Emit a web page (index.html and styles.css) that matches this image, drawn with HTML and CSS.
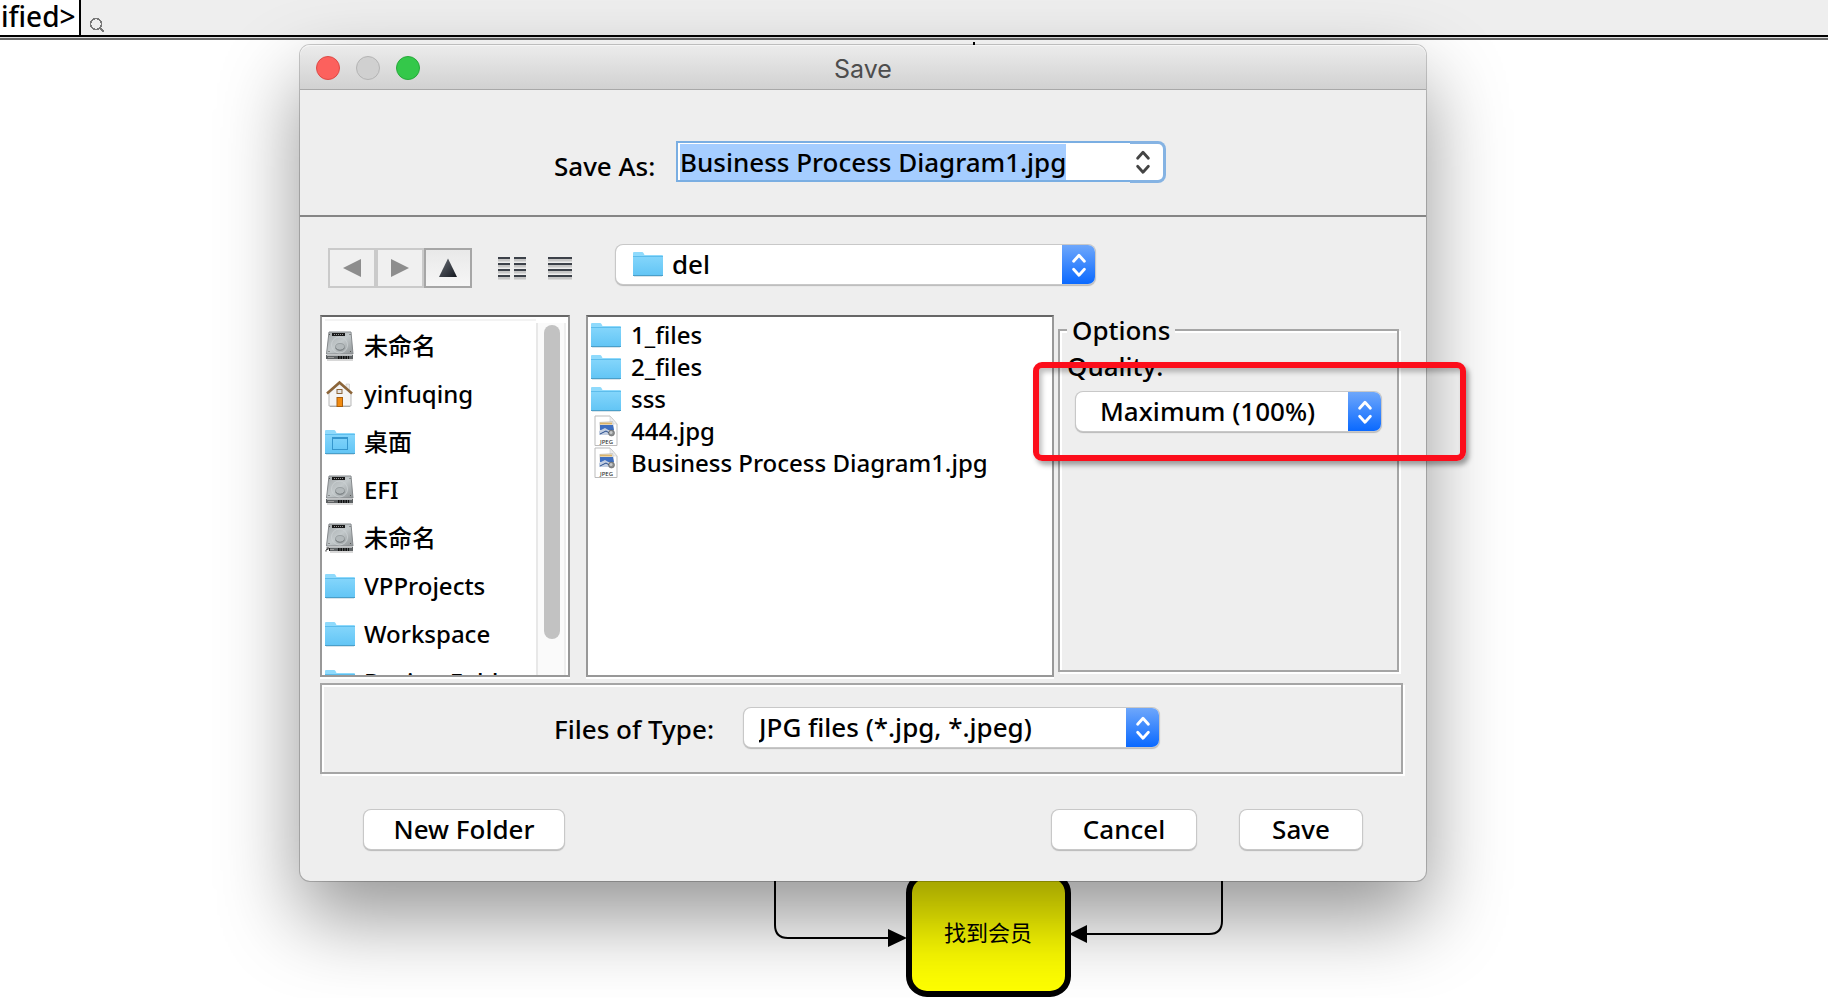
FILE: index.html
```html
<!DOCTYPE html>
<html lang="en">
<head>
    <meta charset="UTF-8">
    <meta name="viewport" content="width=device-width, initial-scale=1.0">
    <title>Save</title>
    <link rel="stylesheet" href="styles.css">
</head>
<body>
    <!-- shared icons -->
    <svg class="sprite" aria-hidden="true">
        <defs>
            <linearGradient id="folderFill" x1="0" y1="0" x2="0" y2="1">
                <stop offset="0" stop-color="#83d5fb"/>
                <stop offset="1" stop-color="#62c5f5"/>
            </linearGradient>
            <linearGradient id="diskFill" x1="0" y1="0" x2="1" y2="1">
                <stop offset="0" stop-color="#a4a9ab"/>
                <stop offset="0.5" stop-color="#c3c9cb"/>
                <stop offset="1" stop-color="#8f9496"/>
            </linearGradient>
            <linearGradient id="darkFill" x1="0" y1="0" x2="1" y2="1">
                <stop offset="0" stop-color="#6b7078"/>
                <stop offset="1" stop-color="#14181f"/>
            </linearGradient>
        </defs>
        <symbol id="folder" viewBox="0 0 30 26">
            <path d="M0 23.500V2Q0 1 1 1h8q1 0 1.500 1l1 2H29q1 0 1 1v18.500q0 1-1 1H1q-1 0-1-1z" fill="#8fdafc"/>
            <path d="M0 6h30v17.500q0 1-1 1H1q-1 0-1-1z" fill="url(#folderFill)"/>
            <path d="M0 5.500h30" stroke="#5dbdec"/>
            <path d="M0 24.500h30" stroke="#4a9fc9"/>
            <path d="M1 25.500h28" stroke="#d9e4ea"/>
        </symbol>
        <symbol id="desktop" viewBox="0 0 30 26">
            <use href="#folder"/>
            <rect x="7.500" y="8.500" width="15" height="12" fill="none" stroke="#3596cd"/>
            <path d="M7 9h16" stroke="#3596cd" stroke-width="2"/>
        </symbol>
        <symbol id="disk" viewBox="0 0 30 30">
            <path d="M2 28h26v2H2z" fill="#d8d8d8"/>
            <path d="M4 1h22l2 22H1.500z" fill="url(#diskFill)" stroke="#85898c"/>
            <path d="M1 24h27v4H1z" fill="#5e6264"/>
            <path d="M2 24.500h25" stroke="#b5b9bb"/>
            <path d="M13 26.500h11" stroke="#111" stroke-width="3" stroke-dasharray="1.500 1"/>
            <path d="M3 26.500h6" stroke="#999"/>
            <rect x="7" y="2" width="13" height="3" fill="#1a1a1a"/>
            <path d="M9 3.500h9" stroke="#999" stroke-dasharray="1 1"/>
            <circle cx="14.500" cy="14" r="8" fill="none" stroke="#cdd2d4" stroke-width="0.800"/>
            <ellipse cx="15" cy="16" rx="4.500" ry="3.500" fill="#b3b9bb" stroke="#8f9598" stroke-width="0.800"/>
            <path d="M10.500 17q4.500 4.500 9 0" fill="none" stroke="#777d80"/>
            <path d="M4.500 3v1M25 3v1M4 20v1M25.500 20v1" stroke="#555"/>
        </symbol>
        <symbol id="diskAlias" viewBox="0 0 30 30">
            <use href="#disk"/>
            <path d="M0 24h5v6H0z" fill="#fff"/>
            <path d="M1 28.500v-1q0-1.500 2.500-1.500M1.500 25h3v3" fill="none" stroke="#111"/>
        </symbol>
        <symbol id="home" viewBox="0 0 30 30">
            <path d="M21 5h3.500v8H21z" fill="#eee" stroke="#bbb" stroke-width="0.500"/>
            <path d="M4 14 14.500 5 26 14v13H4z" fill="#f4f4f4" stroke="#b9b9b9"/>
            <path d="M5 27.500h20" stroke="#aaa"/>
            <path d="M2 14.500 14.500 3.500 27 14.500" fill="none" stroke="#8c6539" stroke-width="2.500"/>
            <rect x="12" y="10.500" width="5" height="4" fill="#e4e4e4" stroke="#8c6539"/>
            <rect x="12" y="18.500" width="5.500" height="9" fill="#f28b10" stroke="#a85e0c"/>
        </symbol>
        <symbol id="jpeg" viewBox="0 0 30 32">
            <path d="M4 1h15l7 8v21.500H4z" fill="#fff" stroke="#bbb"/>
            <path d="M19 1v5q0 3 3 3h4z" fill="#eee" stroke="#c8c8c8" stroke-width="0.500"/>
            <path d="M9 7h13v9H9z" fill="#f3f3f3" stroke="#aaa" stroke-width="0.500" transform="rotate(-4 15 11)"/>
            <path d="M9 7.500h12v2H9z" fill="#d9b36a"/>
            <path d="M9 10h13l1 5H9z" fill="#3f6fc0"/>
            <path d="M8 16l6-3 5 3 4-1v5H8z" fill="#c3cfe2"/>
            <path d="M9 19l6-3 5 3" fill="none" stroke="#234a8c"/>
            <circle cx="20.500" cy="18" r="3" fill="#8d9091" stroke="#4c4c4c" stroke-width="0.500"/>
            <circle cx="20" cy="17.500" r="1.500" fill="#c7c9ca"/>
            <text x="15.500" y="28.500" class="jpeg-tag">JPEG</text>
        </symbol>
        <symbol id="updown" viewBox="0 0 16 26">
            <path d="M3 9.500 8 4l5 5.500M3 17l5 5.500L13 17" fill="none" stroke="currentColor" stroke-width="2.600" stroke-linecap="round" stroke-linejoin="round"/>
        </symbol>
    </svg>

    <header class="breadcrumb">
        <span class="crumb">ified&gt;</span>
        <svg class="search" width="16" height="16" viewBox="0 0 16 16" shape-rendering="crispEdges">
            <circle cx="7" cy="7" r="5.500" fill="none" stroke="#777" stroke-width="1.500"/>
            <path d="M11 11l4 4" stroke="#777" stroke-width="2"/>
        </svg>
    </header>

    <main class="canvas">
        <svg class="diagram" width="480" height="958" viewBox="0 0 480 958">
            <path d="M209 2v4" stroke="#000" stroke-width="2"/>
            <g fill="none" stroke="#000" stroke-width="2">
                <path d="M10 800v85q0 13 13 13h100"/>
                <path d="M457 800v81q0 13-13 13H320"/>
            </g>
            <path d="M123 889v18l19-9z"/>
            <path d="M322 885v18l-18-9z"/>
            <rect x="144" y="835" width="159" height="119" rx="18" fill="#ff0" stroke="#000" stroke-width="6"/>
            <text class="node-text" x="223" y="901">找到会员</text>
        </svg>

        <form class="dialog">
            <div class="titlebar">
                <div class="lights">
                    <button type="button" class="light red" aria-label="Close"></button>
                    <button type="button" class="light gray" aria-label="Minimize" disabled></button>
                    <button type="button" class="light green" aria-label="Zoom"></button>
                </div>
                <h1>Save</h1>
            </div>

            <div class="name-row">
                <label for="fileName">Save As:</label>
                <div class="name-field">
                    <input type="text" id="fileName" value="Business Process Diagram1.jpg" autofocus>
                    <button type="button" class="history" aria-label="Recent names">
                        <svg width="18" height="28"><use href="#updown"/></svg>
                    </button>
                </div>
            </div>

            <div class="tools">
                <div class="nav">
                    <button type="button" aria-label="Back" disabled>
                        <svg width="20" height="22" viewBox="0 0 20 22"><path d="M1 11 19 2v18z" fill="#8d8d8d"/></svg>
                    </button>
                    <button type="button" aria-label="Forward" disabled>
                        <svg width="20" height="22" viewBox="0 0 20 22"><path d="M19 11 1 2v18z" fill="#8d8d8d"/></svg>
                    </button>
                    <button type="button" aria-label="Up">
                        <svg width="20" height="22" viewBox="0 0 20 22"><path d="M10 1.500 19 20H1z" fill="url(#darkFill)"/></svg>
                    </button>
                </div>
                <button type="button" class="view" aria-label="Columns">
                    <svg width="30" height="24" viewBox="0 0 30 24">
                        <path d="M1 4h12M17 4h12M1 10h12M17 10h12M1 16h12M17 16h12M1 22h12M17 22h12" stroke="#c6c6c6" stroke-width="3"/>
                        <path d="M1 2h12M17 2h12M1 8h12M17 8h12M1 14h12M17 14h12M1 20h12M17 20h12" stroke="#3c4149" stroke-width="2"/>
                    </svg>
                </button>
                <button type="button" class="view" aria-label="List">
                    <svg width="26" height="24" viewBox="0 0 26 24">
                        <path d="M1 4h24M1 10h24M1 16h24M1 22h24" stroke="#c6c6c6" stroke-width="3"/>
                        <path d="M1 2h24M1 8h24M1 14h24M1 20h24" stroke="#3c4149" stroke-width="2"/>
                    </svg>
                </button>
                <div class="combo combo-folder">
                    <svg class="combo-icon" width="30" height="26"><use href="#folder"/></svg>
                    <select aria-label="Folder">
                        <option>del</option>
                    </select>
                    <span class="arrows"><svg width="18" height="28"><use href="#updown"/></svg></span>
                </div>
            </div>

            <div class="panes">
                <div class="places">
                    <ul>
                        <li><svg width="30" height="30"><use href="#disk"/></svg>未命名</li>
                        <li><svg width="30" height="30"><use href="#home"/></svg>yinfuqing</li>
                        <li><svg width="30" height="26"><use href="#desktop"/></svg>桌面</li>
                        <li><svg width="30" height="30"><use href="#disk"/></svg>EFI</li>
                        <li><svg width="30" height="30"><use href="#diskAlias"/></svg>未命名</li>
                        <li><svg width="30" height="26"><use href="#folder"/></svg>VPProjects</li>
                        <li><svg width="30" height="26"><use href="#folder"/></svg>Workspace</li>
                        <li><svg width="30" height="26"><use href="#folder"/></svg>Design Folder</li>
                    </ul>
                    <div class="track"><div class="thumb"></div></div>
                </div>

                <ul class="files">
                    <li><svg width="30" height="26"><use href="#folder"/></svg>1_files</li>
                    <li><svg width="30" height="26"><use href="#folder"/></svg>2_files</li>
                    <li><svg width="30" height="26"><use href="#folder"/></svg>sss</li>
                    <li><svg width="30" height="32"><use href="#jpeg"/></svg>444.jpg</li>
                    <li><svg width="30" height="32"><use href="#jpeg"/></svg>Business Process Diagram1.jpg</li>
                </ul>

                <fieldset class="options">
                    <legend>Options</legend>
                    <label for="quality">Quality:</label>
                    <div class="combo combo-quality">
                        <select id="quality">
                            <option>Maximum (100%)</option>
                        </select>
                        <span class="arrows"><svg width="18" height="28"><use href="#updown"/></svg></span>
                    </div>
                    <div class="highlight"></div>
                </fieldset>
            </div>

            <div class="type-row">
                <label for="fileType">Files of Type:</label>
                <div class="combo combo-type">
                    <select id="fileType">
                        <option>JPG files (*.jpg, *.jpeg)</option>
                    </select>
                    <span class="arrows"><svg width="18" height="28"><use href="#updown"/></svg></span>
                </div>
            </div>

            <div class="actions">
                <button type="button" class="btn btn-new">New Folder</button>
                <button type="button" class="btn btn-cancel">Cancel</button>
                <button type="submit" class="btn btn-save">Save</button>
            </div>
        </form>
    </main>

    <script>
        document.getElementById('fileName').focus();
        document.getElementById('fileName').select();
    </script>
</body>
</html>
```

FILE: styles.css
```css
* {
    box-sizing: border-box;
}

body {
    margin: 0;
    background: #fff;
    color: #000;
    font-family: "Noto Sans", "Noto Sans CJK SC", sans-serif;
    font-size: 24px;
    font-weight: 500;
    line-height: 32px;
}

button,
input,
select {
    font: inherit;
    color: inherit;
    margin: 0;
}

ul {
    list-style: none;
    margin: 0;
    padding: 0;
}

svg {
    display: block;
    flex: none;
}

.sprite {
    position: absolute;
    width: 0;
    height: 0;
    visibility: hidden;
}

/* top bar */
.breadcrumb {
    display: flex;
    height: 40px;
    background: #eee;
    border-bottom: 2px solid #666;
    box-shadow: inset 0 -1px 0 #ddd, inset 0 -3px 0 #000;
}

.crumb {
    height: 37px;
    padding: 0 3px 0 1px;
    background: #fff;
    border-right: 2px solid #000;
    border-bottom: 2px solid #000;
    font-size: 28px;
}

.search {
    margin: 17px 0 0 8px;
}

/* diagram behind the dialog */
.canvas {
    position: relative;
    height: calc(100vh - 40px);
    padding-top: 5px;
}

.diagram {
    position: absolute;
    left: 765px;
    top: 0;
}

.node-text {
    font-family: "Noto Sans CJK SC", sans-serif;
    font-size: 22px;
    font-weight: 400;
    text-anchor: middle;
}

.jpeg-tag {
    font-size: 6px;
    text-anchor: middle;
    fill: #333;
}

/* dialog */
.dialog {
    position: relative;
    margin: 0 402px 0 300px;
    background: #eee;
    border-radius: 10px;
    box-shadow: 0 0 0 1px rgba(0, 0, 0, 0.2), 0 36px 80px rgba(0, 0, 0, 0.42);
}

.titlebar {
    position: relative;
    display: flex;
    align-items: center;
    justify-content: center;
    height: 45px;
    padding-top: 3px;
    border-radius: 10px 10px 0 0;
    border-bottom: 1px solid #a8a8a8;
    background: linear-gradient(#ececec, #d1d1d1);
    box-shadow: inset 0 1px 0 #f6f6f6;
}

.titlebar h1 {
    margin: 0;
    font-family: Inter, sans-serif;
    font-size: 25px;
    font-weight: 400;
    color: #4d4d4d;
}

.lights {
    position: absolute;
    left: 16px;
    top: 11px;
    display: flex;
    gap: 16px;
}

.light {
    width: 24px;
    height: 24px;
    padding: 0;
    border: 1px solid #b4b4b4;
    border-radius: 50%;
    background: #d0d0d0;
}

.light.red {
    background: #fc615d;
    border-color: #dd4a46;
}

.light.green {
    background: #34c84a;
    border-color: #27a93a;
}

.name-row {
    display: flex;
    align-items: center;
    height: 127px;
    padding: 18px 0 0 254px;
    border-bottom: 2px solid #858585;
}

.name-row label {
    width: 122px;
    padding-top: 8px;
    font-size: 26px;
}

.name-field {
    display: flex;
    align-items: center;
}

.name-field input {
    width: 454px;
    height: 41px;
    padding: 0 2px;
    border: 2px solid #7aaee2;
    border-right: 0;
    background: #fff;
    font-size: 26px;
    outline: none;
}

.name-field input::selection {
    background: #a5cdff;
    color: #000;
}

.history {
    display: flex;
    align-items: center;
    justify-content: center;
    width: 36px;
    height: 42px;
    padding: 0 8px 0 0;
    border: 3px solid #85b3e3;
    border-left: 0;
    border-radius: 0 8px 8px 0;
    background: #fff;
    color: #444;
}

/* navigation and current folder */
.tools {
    display: flex;
    align-items: flex-start;
    padding: 28px 28px 27px;
}

.nav {
    display: flex;
    margin: 3px 25px 0 0;
}

.nav button {
    display: flex;
    align-items: center;
    justify-content: center;
    width: 48px;
    height: 40px;
    padding: 0;
    border: 2px solid #a6a6a6;
    background: linear-gradient(#e9e9e9, #f6f6f6);
}

.nav button:disabled {
    border-color: #cacaca;
    background: #f0f0f0;
}

.view {
    margin: 11px 20px 0 0;
    padding: 0;
    border: 0;
    background: none;
}

.combo {
    position: relative;
    display: flex;
    height: 39px;
    border-radius: 7px;
    background: #fff;
    box-shadow: 0 0 0 1px #c8c8c8, 0 1px 1px 1px #b8b8b8;
}

.combo select {
    appearance: none;
    flex: 1;
    min-width: 0;
    height: 39px;
    padding: 0 0 2px 15px;
    border: 0;
    border-radius: 7px 0 0 7px;
    background: none;
    font-size: 26px;
    outline: none;
}

.arrows {
    display: flex;
    align-items: center;
    justify-content: center;
    width: 33px;
    border-radius: 0 7px 7px 0;
    background: linear-gradient(#6ea7fb, #0a69ff);
    color: #fff;
    pointer-events: none;
}

.combo-folder {
    width: 479px;
    margin-left: 23px;
}

.combo-icon {
    margin: 6px 0 0 17px;
}

.combo-folder select {
    padding-left: 9px;
}

/* three panes */
.panes {
    display: flex;
    height: 362px;
    padding: 0 27px 0 20px;
}

.places,
.files {
    border: 2px solid #989898;
    border-top-color: #666;
    background: #fff;
    box-shadow: 0 2px 0 #fff;
}

.places {
    display: flex;
    width: 250px;
    padding: 2px 2px 0 0;
    overflow: hidden;
}

.places ul {
    flex: 1;
    min-width: 0;
    margin-left: 3px;
    border-top: 2px solid #f3f3f3;
    overflow: hidden;
}

.places li {
    display: flex;
    align-items: center;
    gap: 9px;
    height: 48px;
    padding-top: 2px;
    white-space: nowrap;
}

.track {
    width: 30px;
    margin: 4px 0 0;
    padding: 2px 4px 0 6px;
    border-left: 2px solid #e8e8e8;
    border-right: 2px solid #eee;
    background: #fafafa;
}

.thumb {
    width: 16px;
    height: 314px;
    border-radius: 8px;
    background: #c2c2c2;
}

.files {
    flex: 1;
    min-width: 0;
    margin: 0 4px 0 16px;
    padding: 2px 0 0 3px;
}

.files li {
    display: flex;
    align-items: center;
    gap: 10px;
    height: 32px;
    white-space: nowrap;
}

.options {
    position: relative;
    width: 341px;
    margin: 0 0 5px;
    padding: 5px 16px 0 7px;
    border: 2px solid #a5a5a5;
    box-shadow: 2px 2px 0 #fff, inset 2px 2px 0 #fff;
}

.options legend {
    padding: 0 5px;
    background: #eee;
    font-size: 26px;
    line-height: 30px;
}

.options label {
    display: block;
    font-size: 26px;
}

.combo-quality {
    margin: 10px 0 0 9px;
}

.combo-quality select {
    padding-left: 24px;
}

.highlight {
    position: absolute;
    left: -27px;
    top: 17px;
    width: 433px;
    height: 99px;
    border: 6px solid #fc0d1b;
    border-radius: 9px;
    box-shadow: 3px 4px 5px rgba(0, 0, 0, 0.35), inset 3px 4px 5px rgba(0, 0, 0, 0.25);
    pointer-events: none;
}

.type-row {
    display: flex;
    align-items: center;
    height: 91px;
    margin: 6px 23px 0 20px;
    padding: 0 0 2px 232px;
    border: 2px solid #a5a5a5;
    box-shadow: 2px 2px 0 #fff, inset 2px 2px 0 #fff;
}

.type-row label {
    width: 190px;
    padding-top: 3px;
    font-size: 26px;
}

.combo-type {
    width: 415px;
}

/* bottom buttons */
.actions {
    display: flex;
    padding: 36px 64px 32px;
}

.btn {
    height: 39px;
    padding: 0 0 2px;
    border: 0;
    border-radius: 7px;
    background: #fff;
    box-shadow: 0 0 0 1px #c8c8c8, 0 1px 1px 1px #b8b8b8;
    font-size: 26px;
    line-height: 36px;
}

.btn-new {
    width: 200px;
    margin-right: auto;
}

.btn-cancel {
    width: 144px;
    margin-right: 44px;
}

.btn-save {
    width: 122px;
}
```
